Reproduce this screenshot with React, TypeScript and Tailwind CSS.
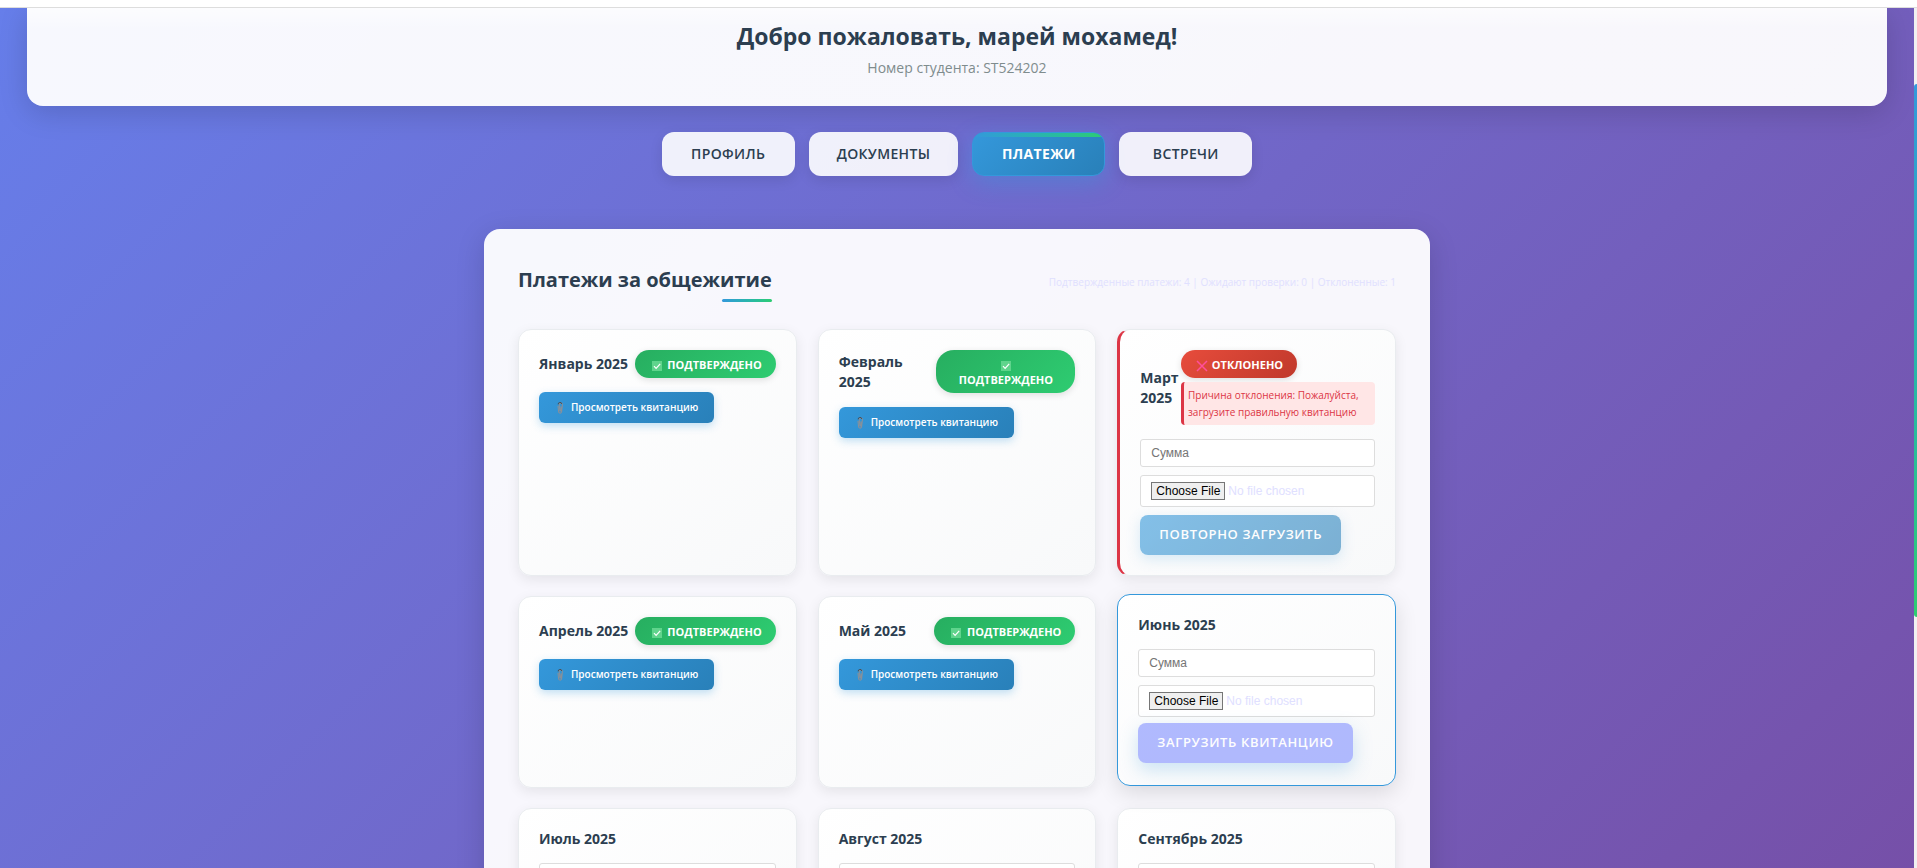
import { FC } from "react";
import clsx from "clsx";

/* -------------------------------------------------------------------------- */
/*                               Types & Constants                            */
/* -------------------------------------------------------------------------- */

type PaymentStatus = "approved" | "rejected" | "empty";

interface Payment {
  month: string;
  status: PaymentStatus;
  reason?: string;
  active?: boolean;
}

const TABS = ["Профиль", "Документы", "Платежи", "Встречи"];
const ACTIVE_TAB = "Платежи";

const PAYMENTS: Payment[] = [
  { month: "Январь 2025", status: "approved" },
  { month: "Февраль 2025", status: "approved" },
  {
    month: "Март 2025",
    status: "rejected",
    reason: "Пожалуйста, загрузите правильную квитанцию",
  },
  { month: "Апрель 2025", status: "approved" },
  { month: "Май 2025", status: "approved" },
  { month: "Июнь 2025", status: "empty", active: true },
  { month: "Июль 2025", status: "empty" },
  { month: "Август 2025", status: "empty" },
  { month: "Сентябрь 2025", status: "empty" },
];

/* -------------------------------------------------------------------------- */
/*                                   Icons                                    */
/* -------------------------------------------------------------------------- */

const CheckIcon: FC = () => (
  <svg viewBox="0 0 10 10" className="mx-[3px] inline-block h-[10px] w-[10px]" aria-hidden>
    <rect width="10" height="10" fill="#5fd48c" />
    <path d="M2 5.2 4.1 7.3 8.2 2.8" fill="none" stroke="#fff" strokeWidth="1.2" />
  </svg>
);

const CrossIcon: FC = () => (
  <svg viewBox="0 0 12 12" className="mr-px ml-px inline-block h-[12px] w-[12px]" aria-hidden>
    <path d="M1 1 11 11M11 1 1 11" fill="none" stroke="#ff4f9b" strokeWidth="1.5" />
  </svg>
);

const ClipIcon: FC = () => (
  <svg viewBox="0 0 10 12" className="h-[12px] w-[10px]" aria-hidden>
    <path
      d="M3 4 3.6 9.6a1.5 1.5 0 0 0 3 0L7.4 3a1.6 1.6 0 0 0-3.2-.6L4.8 8.4a.5.5 0 0 0 1 0L6 4.4"
      fill="none"
      stroke="#87909a"
      strokeWidth="1.1"
    />
    <path d="M3.2 2.4A1.8 1.8 0 0 1 6.8 2" fill="none" stroke="#444b52" strokeWidth="0.9" />
  </svg>
);

/* -------------------------------------------------------------------------- */
/*                              Payment card parts                            */
/* -------------------------------------------------------------------------- */

const StatusBadge: FC<{ status: PaymentStatus }> = ({ status }) => (
  <span
    className={clsx(
      "inline-block rounded-[18px] px-[14px] pt-[7px] pb-[6px] text-center text-[11px] leading-[15px] font-bold text-white uppercase shadow-[0_2px_7px_rgba(0,0,0,0.12)]",
      status === "approved"
        ? "bg-linear-135 from-[#27ae60] to-[#2ecc71]"
        : "bg-linear-135 from-[#e74c3c] to-[#c0392b]"
    )}
  >
    {status === "approved" ? <CheckIcon /> : <CrossIcon />}{" "}
    {status === "approved" ? "Подтверждено" : "Отклонено"}
  </span>
);

const UploadForm: FC<{ payment: Payment }> = ({ payment }) => {
  const rejected = payment.status === "rejected";

  return (
    <form className="flex flex-col items-start gap-2">
      <input
        type="text"
        placeholder="Сумма"
        aria-label={`Сумма, ${payment.month}`}
        className="h-7 w-full rounded-[3px] border border-[#ddd] bg-white px-[10px] font-['Liberation_Sans',sans-serif] text-xs text-black placeholder:text-[#757575]"
      />
      <input
        type="file"
        aria-label={`Квитанция, ${payment.month}`}
        className="h-8 w-full rounded-[3px] border border-[#ddd] bg-white px-[10px] py-[6px] font-['Liberation_Sans',sans-serif] text-xs leading-4 text-[#e0e0ff] file:mr-[3px] file:border file:border-solid file:border-[#767676] file:bg-[#efefef] file:px-1 file:text-black"
      />
      <button
        type="button"
        className={clsx(
          "h-10 rounded-lg px-[19px] text-[13px] font-semibold tracking-wider text-white uppercase",
          payment.active
            ? "-translate-y-0.5 bg-[#7f8eff] opacity-60 shadow-[0_7px_18px_rgba(52,152,219,0.4)]"
            : "bg-linear-135 from-[#3498db] to-[#2980b9] opacity-60 shadow-[0_4px_13px_rgba(52,152,219,0.3)]"
        )}
      >
        {rejected ? "Повторно загрузить" : "Загрузить квитанцию"}
      </button>
    </form>
  );
};

const PaymentCard: FC<{ payment: Payment }> = ({ payment }) => {
  const { month, status, reason, active } = payment;

  return (
    <article
      className={clsx(
        "rounded-[13px] border bg-linear-145 from-white to-[#f8f9fa] px-5 py-5",
        active
          ? "-translate-y-0.5 border-[#3498db] shadow-[0_7px_22px_rgba(0,0,0,0.12)]"
          : "border-[#e9ecef] shadow-[0_4px_13px_rgba(0,0,0,0.08)]",
        status === "rejected" && "border-l-[3px] border-l-[#dc3545]"
      )}
    >
      <div className="mb-[14px] flex items-center justify-between">
        <h3 className="text-sm leading-5 font-bold text-[#2c3e50]">{month}</h3>
        {status === "approved" && <StatusBadge status={status} />}
        {status === "rejected" && (
          <div className="flex flex-col items-start gap-1">
            <StatusBadge status={status} />
            <p className="rounded border-l-[3px] border-[#dc3545] bg-[#ffe6e6] px-1 pt-[5px] pb-1 text-[10px] leading-[17px] text-[#dc3545]">
              Причина отклонения: {reason}
            </p>
          </div>
        )}
      </div>

      {status === "approved" ? (
        <a
          href="#receipt"
          className="inline-flex h-[31px] items-center gap-[6px] rounded-md bg-linear-135 from-[#3498db] to-[#2980b9] px-4 text-[10px] font-semibold text-white shadow-[0_3px_9px_rgba(52,152,219,0.3)]"
        >
          <ClipIcon /> Просмотреть квитанцию
        </a>
      ) : (
        <UploadForm payment={payment} />
      )}
    </article>
  );
};

/* -------------------------------------------------------------------------- */
/*                                    Page                                    */
/* -------------------------------------------------------------------------- */

const App: FC = () => {
  return (
    <div className="flex h-screen flex-col overflow-hidden bg-white font-['Open_Sans','Noto_Sans',sans-serif]">
      <div className="h-2 shrink-0 border-b border-[#ddd]" />

      <div className="flex min-h-0 flex-1">
        <div className="min-w-0 flex-1 overflow-hidden">
          <div className="flow-root min-h-full bg-linear-135 from-[#667eea] to-[#764ba2] pb-24">
            <header className="mx-[27px] h-[98px] rounded-b-2xl bg-linear-to-b from-white/98 to-white/95 to-20% pt-[10px] text-center shadow-[0_7px_29px_rgba(0,0,0,0.15)]">
              <h1 className="text-[23px] leading-9 font-bold text-[#2c3e50]">
                Добро пожаловать, марей мохамед!
              </h1>
              <p className="text-sm leading-7 font-medium text-[#7f8c8d]">
                Номер студента: ST524202
              </p>
            </header>

            <nav className="mt-[26px] flex justify-center gap-[14px]">
              {TABS.map((tab) => (
                <button
                  key={tab}
                  type="button"
                  className={clsx(
                    "relative h-11 min-w-[133px] overflow-hidden rounded-xl px-7 text-sm tracking-wide uppercase",
                    tab === ACTIVE_TAB
                      ? "border border-[#3498db] bg-linear-135 from-[#3498db] to-[#2980b9] font-bold text-white shadow-[0_7px_22px_rgba(52,152,219,0.4)]"
                      : "bg-white/90 font-semibold text-[#2c3e50] shadow-[0_4px_13px_rgba(0,0,0,0.1)]"
                  )}
                >
                  {tab === ACTIVE_TAB && (
                    <span className="absolute inset-x-0 top-0 h-1 bg-linear-to-r from-[#3498db] to-[#2ecc71]" />
                  )}
                  {tab}
                </button>
              ))}
            </nav>

            <main className="mx-auto mt-[53px] max-w-[946px] rounded-2xl bg-white/95 px-[34px] pt-[33px] pb-9 shadow-[0_7px_29px_rgba(0,0,0,0.15)]">
              <div className="mb-[27px] flex items-center justify-between">
                <h2 className="relative pb-1 text-xl leading-9 font-bold text-[#2c3e50]">
                  Платежи за общежитие
                  <span className="absolute right-0 bottom-0 h-[3px] w-[50px] rounded-sm bg-linear-to-r from-[#3498db] to-[#2ecc71]" />
                </h2>
                <p className="text-[10px] text-[#e0e0ff]">
                  Подтвержденные платежи: 4 | Ожидают проверки: 0 | Отклоненные: 1
                </p>
              </div>

              <div className="grid grid-cols-3 gap-x-[21px] gap-y-5">
                {PAYMENTS.map((payment) => (
                  <PaymentCard key={payment.month} payment={payment} />
                ))}
              </div>
            </main>
          </div>
        </div>

        {/* page scroll track */}
        <div className="w-[3px] shrink-0 bg-[#f1f1f1] pt-[76px]">
          <div className="h-[533px] rounded-l-sm bg-linear-to-b from-[#3498db] to-[#2ecc71]" />
        </div>
      </div>
    </div>
  );
};

export default App;
